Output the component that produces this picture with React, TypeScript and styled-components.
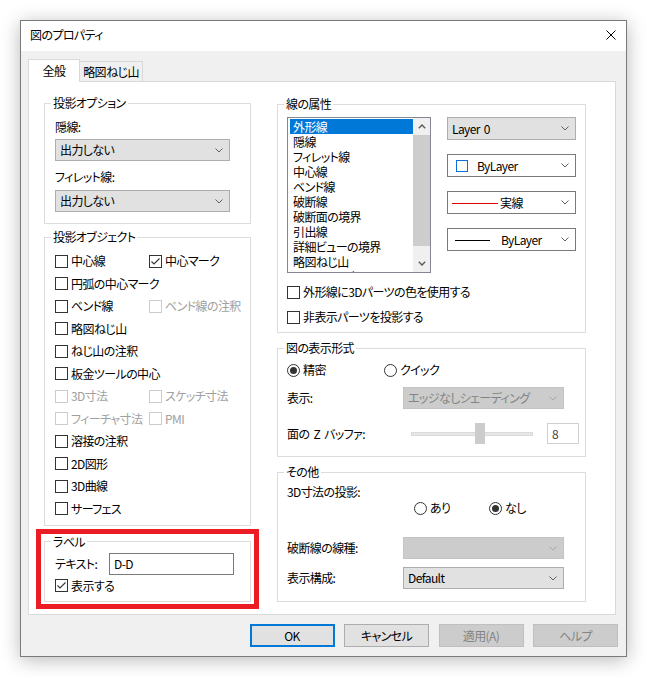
import React from "react";
import styled, { createGlobalStyle } from "styled-components";

const GlobalStyle = createGlobalStyle`
  html, body {
    margin: 0;
    background: #ffffff;
  }
  body {
    font-family: "Noto Sans CJK JP", "Noto Sans", sans-serif;
    font-size: 12px;
    line-height: 16px;
    letter-spacing: -0.6px;
    word-spacing: 2px;
    color: #000000;
    font-feature-settings: "palt";
  }
`;

const Page = styled.div`
  padding: 20px;
`;

const Window = styled.div`
  width: 605px;
  height: 635px;
  border: 1px solid #7a7a7a;
  box-shadow: 0 3px 18px rgba(0, 0, 0, 0.28);
  display: flex;
  flex-direction: column;
  background: #f0f0f0;
`;

const TitleBar = styled.div`
  height: 30px;
  flex: none;
  background: #ffffff;
  display: flex;
  align-items: center;
  justify-content: space-between;
  padding: 0 10px 0 9px;
`;

const Title = styled.span`
  margin-top: -2px;
`;

const CloseIcon = styled.svg`
  display: block;
  margin-bottom: 3px;
`;

const Body = styled.div`
  flex: 1;
  display: flex;
  flex-direction: column;
  padding: 8px 8px 9px 7px;
`;

const TabStrip = styled.div`
  display: flex;
  align-items: flex-end;
  height: 23px;
  margin-bottom: -1px;
  position: relative;
  z-index: 1;
`;

const Tab = styled.div<{ $active?: boolean }>`
  box-sizing: border-box;
  display: flex;
  align-items: center;
  justify-content: center;
  border: 1px solid #d9d9d9;
  border-bottom: none;
  background: ${(p) => (p.$active ? "#ffffff" : "#f0f0f0")};
  width: ${(p) => (p.$active ? 52 : 63)}px;
  height: ${(p) => (p.$active ? 23 : 20)}px;
  margin-bottom: ${(p) => (p.$active ? 0 : 1)}px;
  border-left: ${(p) => (p.$active ? "1px solid #d9d9d9" : "none")};
`;

const Panel = styled.div`
  box-sizing: border-box;
  width: 588px;
  height: 534px;
  flex: none;
  background: #ffffff;
  border: 1px solid #d9d9d9;
  display: grid;
  grid-template-columns: 207px 309px;
  column-gap: 26px;
  align-items: start;
  padding: 13px 0 0 15px;
`;

const Column = styled.div<{ $mt?: number }>`
  display: flex;
  flex-direction: column;
  margin-top: ${(p) => p.$mt ?? 0}px;
`;

const Group = styled.fieldset<{ $mt?: number }>`
  margin: ${(p) => p.$mt ?? 0}px 0 0 0;
  padding: 0;
  border: 1px solid #dcdcdc;
  min-width: 0;
`;

const Legend = styled.legend`
  margin-left: 6px;
  padding: 0 2px;
  line-height: 16px;
`;

const GroupBody = styled.div<{ $pad: string }>`
  display: flex;
  flex-direction: column;
  padding: ${(p) => p.$pad};
`;

const Highlight = styled.div`
  margin: 3px -8px 0 -8px;
  border: 5px solid #ec1c24;
  padding: 0 3px 2px 3px;
`;

const FieldLabel = styled.span<{ $width?: number }>`
  display: block;
  flex: none;
  width: ${(p) => (p.$width ? `${p.$width}px` : "auto")};
  white-space: nowrap;
`;

const Row = styled.div<{ $mt?: number; $pl?: number }>`
  display: flex;
  align-items: center;
  margin-top: ${(p) => p.$mt ?? 0}px;
  padding-left: ${(p) => p.$pl ?? 0}px;
`;

type ComboVariant = "gray" | "white" | "disabled";

const comboBorder: Record<ComboVariant, string> = {
  gray: "#adadad",
  white: "#7a7a7a",
  disabled: "#c4c4c4",
};
const comboBg: Record<ComboVariant, string> = {
  gray: "#e1e1e1",
  white: "#ffffff",
  disabled: "#cccccc",
};

const ComboBox = styled.div<{ $variant?: ComboVariant; $width: number; $height?: number; $mt?: number }>`
  box-sizing: border-box;
  flex: none;
  width: ${(p) => p.$width}px;
  height: ${(p) => p.$height ?? 22}px;
  margin-top: ${(p) => p.$mt ?? 0}px;
  display: flex;
  align-items: center;
  padding: 0 6px 0 4px;
  border: 1px solid ${(p) => comboBorder[p.$variant ?? "gray"]};
  background: ${(p) => comboBg[p.$variant ?? "gray"]};
  color: ${(p) => (p.$variant === "disabled" ? "#838383" : "#000000")};
`;

const ComboValue = styled.span`
  flex: 1;
  display: flex;
  align-items: center;
  white-space: pre;
  overflow: hidden;
`;

const ColorSquare = styled.span`
  box-sizing: border-box;
  flex: none;
  width: 12px;
  height: 12px;
  margin: 0 9px 0 4px;
  border: 1.5px solid #0a6fd6;
`;

const LineSample = styled.span<{ $color: string; $width: number; $ml: number; $mr: number }>`
  display: block;
  flex: none;
  width: ${(p) => p.$width}px;
  height: 1px;
  background: ${(p) => p.$color};
  margin: 1px ${(p) => p.$mr}px 0 ${(p) => p.$ml}px;
`;

const Chevron = ({ color = "#606060" }: { color?: string }) => (
  <svg width="8" height="5" viewBox="0 0 8 5" style={{ flex: "none" }}>
    <path d="M0.5 0.5 L4 4 L7.5 0.5" fill="none" stroke={color} strokeWidth="1" />
  </svg>
);

const Combo = ({
  variant = "gray",
  width,
  height,
  mt,
  children,
}: {
  variant?: ComboVariant;
  width: number;
  height?: number;
  mt?: number;
  children?: React.ReactNode;
}) => (
  <ComboBox $variant={variant} $width={width} $height={height} $mt={mt}>
    <ComboValue>{children}</ComboValue>
    <Chevron color={variant === "disabled" ? "#a8a8a8" : "#606060"} />
  </ComboBox>
);

const CheckGrid = styled.div`
  display: grid;
  grid-template-columns: 94px auto;
  row-gap: 6.5px;
`;

const CheckLabel = styled.label<{ $disabled?: boolean; $wide?: boolean; $mt?: number }>`
  display: flex;
  align-items: center;
  height: 16px;
  white-space: nowrap;
  margin-top: ${(p) => p.$mt ?? 0}px;
  grid-column: ${(p) => (p.$wide ? "1 / -1" : "auto")};
  color: ${(p) => (p.$disabled ? "#a0a0a0" : "#000000")};
`;

const Box = styled.span<{ $disabled?: boolean }>`
  box-sizing: border-box;
  flex: none;
  width: 13px;
  height: 13px;
  margin-right: 3px;
  border: 1px solid ${(p) => (p.$disabled ? "#cccccc" : "#333333")};
  background: #ffffff;
  display: flex;
`;

const Check = ({
  label,
  checked,
  disabled,
  wide,
  mt,
}: {
  label: string;
  checked?: boolean;
  disabled?: boolean;
  wide?: boolean;
  mt?: number;
}) => (
  <CheckLabel $disabled={disabled} $wide={wide} $mt={mt}>
    <Box $disabled={disabled}>
      {checked && (
        <svg width="11" height="11" viewBox="0 0 11 11">
          <path d="M1.5 5.5 L4 8 L9.5 2.5" fill="none" stroke="#333333" strokeWidth="1.1" />
        </svg>
      )}
    </Box>
    {label}
  </CheckLabel>
);

const RadioLabel = styled.label<{ $width?: number }>`
  display: flex;
  align-items: center;
  height: 16px;
  width: ${(p) => (p.$width ? `${p.$width}px` : "auto")};
  white-space: nowrap;
`;

const RadioCircle = styled.span<{ $checked?: boolean }>`
  box-sizing: border-box;
  flex: none;
  width: 13px;
  height: 13px;
  margin-right: 3px;
  border-radius: 50%;
  border: 1px solid #333333;
  background: #ffffff;
  display: flex;
  align-items: center;
  justify-content: center;
  &::after {
    content: "";
    display: ${(p) => (p.$checked ? "block" : "none")};
    width: 7px;
    height: 7px;
    border-radius: 50%;
    background: #333333;
  }
`;

const Radio = ({ label, checked, width }: { label: string; checked?: boolean; width?: number }) => (
  <RadioLabel $width={width}>
    <RadioCircle $checked={checked} />
    {label}
  </RadioLabel>
);

const TextBox = styled.div<{ $width: number; $height: number; $border?: string; $color?: string }>`
  box-sizing: border-box;
  flex: none;
  width: ${(p) => p.$width}px;
  height: ${(p) => p.$height}px;
  border: 1px solid ${(p) => p.$border ?? "#7a7a7a"};
  background: #ffffff;
  color: ${(p) => p.$color ?? "#000000"};
  display: flex;
  align-items: center;
  padding-left: 4px;
`;

const AttrGrid = styled.div`
  display: grid;
  grid-template-columns: 144px 129px;
  column-gap: 16px;
  align-items: start;
`;

const ComboStack = styled.div`
  display: flex;
  flex-direction: column;
  gap: 14px;
`;

const ListBox = styled.div`
  box-sizing: border-box;
  height: 156px;
  border: 1px solid #828790;
  background: #ffffff;
  display: flex;
`;

const ListItems = styled.div`
  flex: 1;
  overflow: hidden;
  padding: 1px 0 0 2px;
`;

const ListItem = styled.div<{ $selected?: boolean }>`
  height: 15px;
  line-height: 15px;
  padding-left: 3px;
  white-space: nowrap;
  background: ${(p) => (p.$selected ? "#0078d7" : "transparent")};
  color: ${(p) => (p.$selected ? "#ffffff" : "#000000")};
`;

const ScrollBar = styled.div`
  width: 17px;
  flex: none;
  background: #f0f0f0;
  display: flex;
  flex-direction: column;
`;

const ScrollButton = styled.div`
  height: 17px;
  flex: none;
  display: flex;
  align-items: center;
  justify-content: center;
`;

const ScrollThumb = styled.div`
  height: 111px;
  background: #cdcdcd;
`;

const ScrollSpacer = styled.div`
  flex: 1;
`;

const Slider = styled.div`
  position: relative;
  width: 122px;
  height: 21px;
  flex: none;
  margin-right: 14px;
  &::before {
    content: "";
    position: absolute;
    left: 0;
    right: 0;
    top: 9px;
    height: 4px;
    box-sizing: border-box;
    background: #e7e7e7;
    border: 1px solid #dadada;
  }
`;

const SliderThumb = styled.div`
  position: absolute;
  left: 64px;
  top: 0;
  width: 10px;
  height: 21px;
  background: #cccccc;
`;

const ButtonRow = styled.div`
  display: flex;
  justify-content: flex-end;
  gap: 9.5px;
  margin-top: 9px;
  height: 23px;
`;

const Button = styled.div<{ $primary?: boolean; $disabled?: boolean }>`
  box-sizing: border-box;
  width: 85px;
  height: 23px;
  display: flex;
  align-items: center;
  justify-content: center;
  background: ${(p) => (p.$disabled ? "#cccccc" : "#e1e1e1")};
  border: ${(p) =>
    p.$primary ? "2px solid #0078d7" : p.$disabled ? "1px solid #bfbfbf" : "1px solid #adadad"};
  color: ${(p) => (p.$disabled ? "#838383" : "#000000")};
`;

const lineItems = [
  "外形線",
  "隠線",
  "フィレット線",
  "中心線",
  "ベンド線",
  "破断線",
  "破断面の境界",
  "引出線",
  "詳細ビューの境界",
  "略図ねじ山",
  "ルーティング",
];

const ArrowUp = () => (
  <svg width="8" height="5" viewBox="0 0 8 5">
    <path d="M0.8 4.2 L4 1 L7.2 4.2" fill="none" stroke="#606060" strokeWidth="1.5" />
  </svg>
);

const ArrowDown = () => (
  <svg width="8" height="5" viewBox="0 0 8 5">
    <path d="M0.8 0.8 L4 4 L7.2 0.8" fill="none" stroke="#606060" strokeWidth="1.5" />
  </svg>
);

export default function App() {
  return (
    <>
      <GlobalStyle />
      <Page>
        <Window>
          <TitleBar>
            <Title>図のプロパティ</Title>
            <CloseIcon width="10" height="10" viewBox="0 0 10 10">
              <path d="M0.5 0.5 L9.5 9.5 M9.5 0.5 L0.5 9.5" stroke="#000000" strokeWidth="1" />
            </CloseIcon>
          </TitleBar>
          <Body>
            <TabStrip>
              <Tab $active>全般</Tab>
              <Tab>略図ねじ山</Tab>
            </TabStrip>
            <Panel>
              <Column>
                <Group>
                  <Legend>投影オプション</Legend>
                  <GroupBody $pad="8px 10px 11px 10px">
                    <FieldLabel>隠線:</FieldLabel>
                    <Combo width={175} mt={4}>出力しない</Combo>
                    <Row $mt={8}>
                      <FieldLabel>フィレット線:</FieldLabel>
                    </Row>
                    <Combo width={175} mt={5}>出力しない</Combo>
                  </GroupBody>
                </Group>

                <Group $mt={5}>
                  <Legend>投影オブジェクト</Legend>
                  <GroupBody $pad="8px 10px 8px 10px">
                    <CheckGrid>
                      <Check label="中心線" />
                      <Check label="中心マーク" checked />
                      <Check label="円弧の中心マーク" wide />
                      <Check label="ベンド線" />
                      <Check label="ベンド線の注釈" disabled />
                      <Check label="略図ねじ山" wide />
                      <Check label="ねじ山の注釈" wide />
                      <Check label="板金ツールの中心" wide />
                      <Check label="3D寸法" disabled />
                      <Check label="スケッチ寸法" disabled />
                      <Check label="フィーチャ寸法" disabled />
                      <Check label="PMI" disabled />
                      <Check label="溶接の注釈" wide />
                      <Check label="2D図形" wide />
                      <Check label="3D曲線" wide />
                      <Check label="サーフェス" wide />
                    </CheckGrid>
                  </GroupBody>
                </Group>

                <Highlight>
                  <Group>
                    <Legend>ラベル</Legend>
                    <GroupBody $pad="3px 10px 7px 10px">
                      <Row>
                        <FieldLabel $width={54}>テキスト:</FieldLabel>
                        <TextBox $width={125} $height={22}>D-D</TextBox>
                      </Row>
                      <Check label="表示する" checked mt={3} />
                    </GroupBody>
                  </Group>
                </Highlight>
              </Column>

              <Column $mt={1}>
                <Group>
                  <Legend>線の属性</Legend>
                  <GroupBody $pad="5px 9px 7px 9px">
                    <AttrGrid>
                      <ListBox>
                        <ListItems>
                          {lineItems.map((item, i) => (
                            <ListItem key={item} $selected={i === 0}>
                              {item}
                            </ListItem>
                          ))}
                        </ListItems>
                        <ScrollBar>
                          <ScrollButton>
                            <ArrowUp />
                          </ScrollButton>
                          <ScrollThumb />
                          <ScrollSpacer />
                          <ScrollButton>
                            <ArrowDown />
                          </ScrollButton>
                        </ScrollBar>
                      </ListBox>
                      <ComboStack>
                        <Combo width={129} height={23}>
                          Layer 0
                        </Combo>
                        <Combo variant="white" width={129} height={23}>
                          <ColorSquare />
                          ByLayer
                        </Combo>
                        <Combo variant="white" width={129} height={23}>
                          <LineSample $color="#e00000" $width={46} $ml={0} $mr={2} />
                          実線
                        </Combo>
                        <Combo variant="white" width={129} height={23}>
                          <LineSample $color="#000000" $width={35} $ml={3} $mr={11} />
                          ByLayer
                        </Combo>
                      </ComboStack>
                    </AttrGrid>
                    <Check label="外形線に3Dパーツの色を使用する" mt={11} />
                    <Check label="非表示パーツを投影する" mt={9} />
                  </GroupBody>
                </Group>

                <Group $mt={7}>
                  <Legend>図の表示形式</Legend>
                  <GroupBody $pad="6px 9px 12px 9px">
                    <Row>
                      <Radio label="精密" checked width={97} />
                      <Radio label="クイック" />
                    </Row>
                    <Row $mt={9}>
                      <FieldLabel $width={116}>表示:</FieldLabel>
                      <Combo variant="disabled" width={161}>
                        エッジなしシェーディング
                      </Combo>
                    </Row>
                    <Row $mt={14}>
                      <FieldLabel $width={124}>面の Z バッファ:</FieldLabel>
                      <Slider>
                        <SliderThumb />
                      </Slider>
                      <TextBox $width={32} $height={21} $border="#d0d0d0" $color="#444444">
                        8
                      </TextBox>
                    </Row>
                  </GroupBody>
                </Group>

                <Group $mt={7}>
                  <Legend>その他</Legend>
                  <GroupBody $pad="4px 9px 12px 9px">
                    <FieldLabel>3D寸法の投影:</FieldLabel>
                    <Row $pl={127}>
                      <Radio label="あり" width={75} />
                      <Radio label="なし" checked />
                    </Row>
                    <Row $mt={21}>
                      <FieldLabel $width={116}>破断線の線種:</FieldLabel>
                      <Combo variant="disabled" width={161} />
                    </Row>
                    <Row $mt={8}>
                      <FieldLabel $width={116}>表示構成:</FieldLabel>
                      <Combo width={161}>Default</Combo>
                    </Row>
                  </GroupBody>
                </Group>
              </Column>
            </Panel>
            <ButtonRow>
              <Button $primary>OK</Button>
              <Button>キャンセル</Button>
              <Button $disabled>適用(A)</Button>
              <Button $disabled>ヘルプ</Button>
            </ButtonRow>
          </Body>
        </Window>
      </Page>
    </>
  );
}
